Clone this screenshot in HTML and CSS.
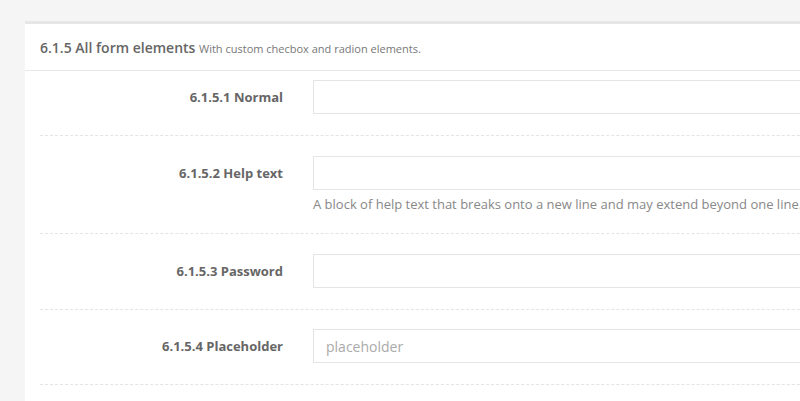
FILE: index.html
```html
<!DOCTYPE html>
<html>
<head>
<meta charset="utf-8">
<link rel="stylesheet" href="styles.css">
</head>
<body>
<div class="page">
  <section class="card">
    <header class="card-head">
      <h3 class="card-title">6.1.5 All form elements <small class="card-sub">With custom checbox and radion elements.</small></h3>
    </header>
    <div class="card-body">
      <div class="form-row">
        <label class="form-label">6.1.5.1 Normal</label>
        <div class="form-field"><input class="form-input" type="text"></div>
      </div>
      <div class="form-row">
        <label class="form-label">6.1.5.2 Help text</label>
        <div class="form-field">
          <input class="form-input" type="text">
          <span class="help">A block of help text that breaks onto a new line and may extend beyond one line.</span>
        </div>
      </div>
      <div class="form-row">
        <label class="form-label">6.1.5.3 Password</label>
        <div class="form-field"><input class="form-input" type="password"></div>
      </div>
      <div class="form-row">
        <label class="form-label">6.1.5.4 Placeholder</label>
        <div class="form-field"><input class="form-input" type="text" placeholder="placeholder"></div>
      </div>
    </div>
  </section>
</div>
</body>
</html>
```

FILE: styles.css
```css
html, body {
  margin: 0;
  padding: 0;
  background: #f5f5f5;
  overflow: hidden;
  height: 401px;
}
body {
  font-family: "Open Sans", "Liberation Sans", sans-serif;
  color: #666;
}
.page {
  padding: 21px 0 0 25px;
}
.card {
  background: #fff;
  border-top: 3px solid #e6e6e6;
  width: 900px;
}
.card-head {
  height: 46px;
  border-bottom: 1px solid #e8e8e8;
  padding: 0 15px;
  display: flex;
  align-items: center;
}
.card-title {
  margin: 0;
  font-size: 14px;
  font-weight: 600;
  color: #666;
  white-space: nowrap;
}
.card-sub {
  font-size: 11px;
  font-weight: 400;
  color: #777;
}
.card-body {
  padding: 0 15px 40px;
}
.form-row {
  display: grid;
  grid-template-columns: 243px 1fr;
  column-gap: 30px;
  padding: 20px 0;
  border-bottom: 1px dashed #e4e4e4;
}
.form-row:first-child {
  padding-top: 9px;
}
.form-row:last-child {
  padding-top: 19px;
}
.form-label {
  text-align: right;
  font-size: 13px;
  font-weight: 700;
  color: #666;
  height: 35px;
  line-height: 34px;
  white-space: nowrap;
}
.form-field {
  display: flex;
  flex-direction: column;
}
.form-input {
  box-sizing: border-box;
  height: 34px;
  width: 100%;
  border: 1px solid #e5e5e5;
  border-radius: 0;
  padding: 0 12px;
  font-family: "Open Sans", "Liberation Sans", sans-serif;
  font-size: 14px;
  color: #555;
  background: #fff;
  outline: none;
}
.form-input::placeholder {
  color: #aaa;
}
.help {
  display: block;
  margin-top: 5px;
  font-size: 13px;
  line-height: 18px;
  color: #888;
  white-space: nowrap;
}
```
